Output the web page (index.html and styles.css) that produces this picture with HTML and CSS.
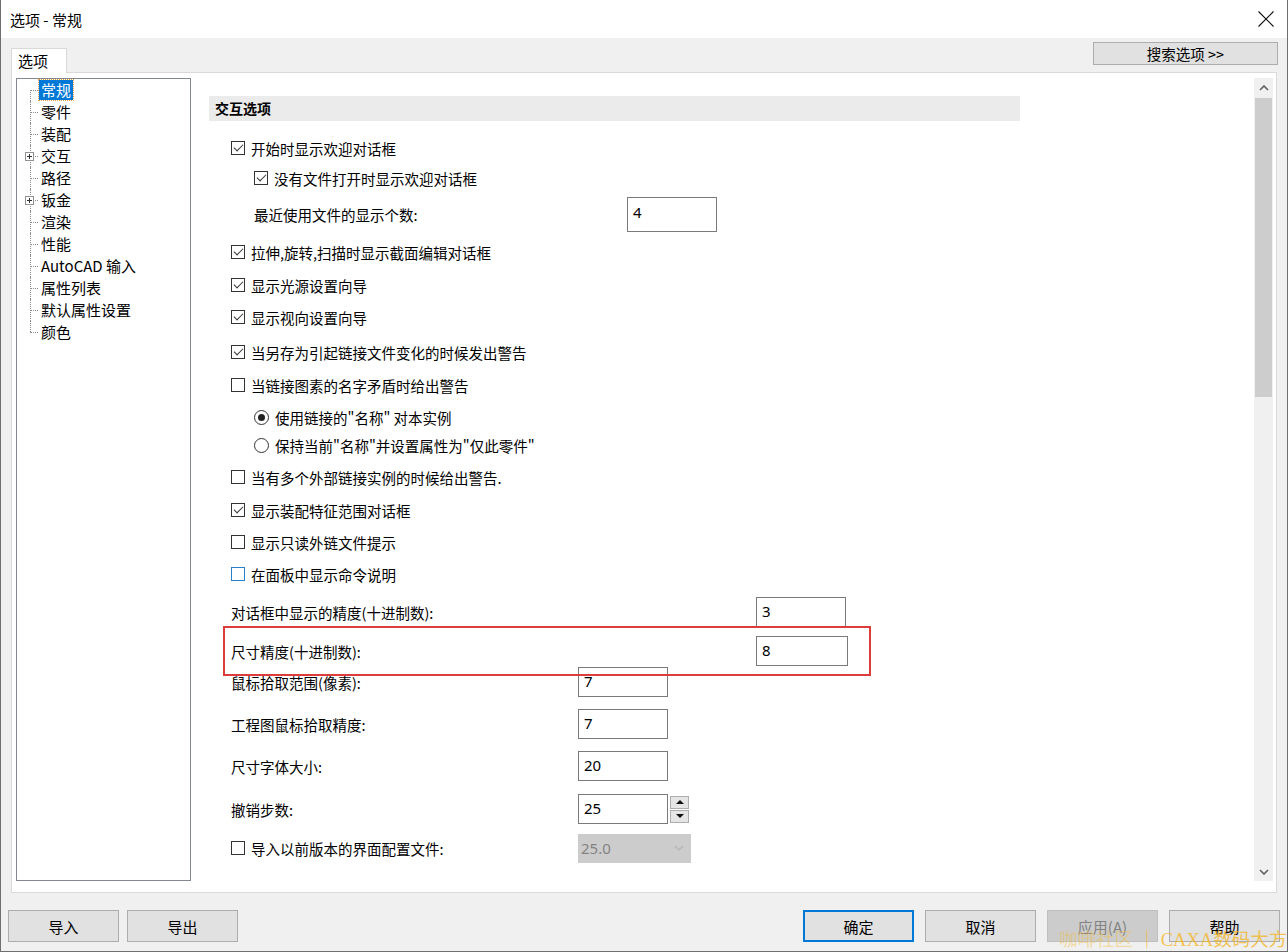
FILE: index.html
```html
<!DOCTYPE html>
<html lang="zh-CN">

<head>
    <meta charset="UTF-8">
    <title>选项 - 常规</title>
    <link rel="stylesheet" href="styles.css">
</head>

<body>
    <div class="window">
        <!-- title bar -->
        <div class="titlebar">
            <span>选项 - 常规</span>
            <svg class="close" width="16" height="16" viewBox="0 0 16 16">
                <path d="M0.5 0.5 L15.5 15.5 M15.5 0.5 L0.5 15.5" stroke="#111" stroke-width="1.1" fill="none" />
            </svg>
        </div>

        <div class="dialog">
            <div class="tab-row">
                <div class="tab">选项</div>
                <button class="search-btn">搜索选项 &gt;&gt;</button>
            </div>

            <div class="panel">
                <!-- left tree -->
                <ul class="tree">
                    <li><span class="node selected">常规</span></li>
                    <li><span class="node">零件</span></li>
                    <li><span class="node">装配</span></li>
                    <li>
                        <svg class="expander" width="9" height="9" viewBox="0 0 9 9">
                            <rect x="0.5" y="0.5" width="8" height="8" fill="#fff" stroke="#919191" />
                            <path d="M2 4.5 H7 M4.5 2 V7" stroke="#333" />
                        </svg>
                        <span class="node">交互</span>
                    </li>
                    <li><span class="node">路径</span></li>
                    <li>
                        <svg class="expander" width="9" height="9" viewBox="0 0 9 9">
                            <rect x="0.5" y="0.5" width="8" height="8" fill="#fff" stroke="#919191" />
                            <path d="M2 4.5 H7 M4.5 2 V7" stroke="#333" />
                        </svg>
                        <span class="node">钣金</span>
                    </li>
                    <li><span class="node">渲染</span></li>
                    <li><span class="node">性能</span></li>
                    <li><span class="node">AutoCAD 输入</span></li>
                    <li><span class="node">属性列表</span></li>
                    <li><span class="node">默认属性设置</span></li>
                    <li><span class="node">颜色</span></li>
                </ul>

                <!-- options page -->
                <div class="content">
                    <div class="scroll-area">
                        <div class="section-head">交互选项</div>

                        <div class="opt first"><span class="cb on"></span>开始时显示欢迎对话框</div>
                        <div class="opt indent sp2"><span class="cb on"></span>没有文件打开时显示欢迎对话框</div>
                        <div class="field indent tall">
                            <span class="label w-373">最近使用文件的显示个数:</span>
                            <div class="textbox tb-tall">4</div>
                        </div>
                        <div class="opt sp6"><span class="cb on"></span>拉伸,旋转,扫描时显示截面编辑对话框</div>
                        <div class="opt sp5"><span class="cb on"></span>显示光源设置向导</div>
                        <div class="opt"><span class="cb on"></span>显示视向设置向导</div>
                        <div class="opt sp7"><span class="cb on"></span>当另存为引起链接文件变化的时候发出警告</div>
                        <div class="opt sp5"><span class="cb"></span>当链接图素的名字矛盾时给出警告</div>
                        <div class="opt indent"><span class="rb on"></span>使用链接的"名称" 对本实例</div>
                        <div class="opt indent sp0"><span class="rb"></span>保持当前"名称"并设置属性为"仅此零件"</div>
                        <div class="opt"><span class="cb"></span>当有多个外部链接实例的时候给出警告.</div>
                        <div class="opt sp5"><span class="cb on"></span>显示装配特征范围对话框</div>
                        <div class="opt"><span class="cb"></span>显示只读外链文件提示</div>
                        <div class="opt"><span class="cb hover"></span>在面板中显示命令说明</div>

                        <div class="field sp9">
                            <span class="label w-525">对话框中显示的精度(十进制数):</span>
                            <div class="textbox">3</div>
                        </div>
                        <div class="field sp9">
                            <span class="label w-525">尺寸精度(十进制数):</span>
                            <div class="textbox wide">8</div>
                        </div>
                        <div class="field sp1">
                            <span class="label w-347">鼠标拾取范围(像素):</span>
                            <div class="textbox">7</div>
                        </div>
                        <div class="field sp12">
                            <span class="label w-347">工程图鼠标拾取精度:</span>
                            <div class="textbox">7</div>
                        </div>
                        <div class="field sp12">
                            <span class="label w-347">尺寸字体大小:</span>
                            <div class="textbox">20</div>
                        </div>
                        <div class="field sp13">
                            <span class="label w-347">撤销步数:</span>
                            <div class="textbox">25</div>
                            <div class="spinner">
                                <span class="spin-btn"><i class="arrow-up"></i></span>
                                <span class="spin-btn"><i class="arrow-down"></i></span>
                            </div>
                        </div>
                        <div class="field sp9">
                            <span class="label w-347"><span class="cb"></span>导入以前版本的界面配置文件:</span>
                            <div class="combo">
                                <span>25.0</span>
                                <svg width="10" height="6" viewBox="0 0 10 6">
                                    <path d="M1 1 L5 5 L9 1" stroke="#b4b4b4" fill="none" stroke-width="1.2" />
                                </svg>
                            </div>
                        </div>
                    </div>

                    <!-- vertical scrollbar -->
                    <div class="scrollbar">
                        <div class="sb-btn">
                            <svg width="10" height="6" viewBox="0 0 10 6">
                                <path d="M1 5 L5 1 L9 5" stroke="#606060" fill="none" stroke-width="1.6" />
                            </svg>
                        </div>
                        <div class="sb-track"><div class="sb-thumb"></div></div>
                        <div class="sb-btn">
                            <svg width="10" height="6" viewBox="0 0 10 6">
                                <path d="M1 1 L5 5 L9 1" stroke="#606060" fill="none" stroke-width="1.6" />
                            </svg>
                        </div>
                    </div>
                </div>
            </div>

            <!-- bottom buttons -->
            <div class="footer">
                <div class="btn-group">
                    <button class="btn">导入</button>
                    <button class="btn">导出</button>
                </div>
                <div class="btn-group right">
                    <button class="btn default">确定</button>
                    <button class="btn">取消</button>
                    <button class="btn disabled">应用(A)</button>
                    <button class="btn">帮助</button>
                </div>
            </div>
        </div>

        <!-- annotation and watermark on top of the screenshot -->
        <div class="mark-box"></div>
        <div class="watermark"><span class="wm-light">咖啡社区</span> ｜ CAXA数码大方</div>
    </div>
</body>

</html>
```

FILE: styles.css
```css
/* Windows style options dialog */
* {
    box-sizing: border-box;
}

body {
    margin: 0;
    font-family: "Noto Sans CJK SC", "Noto Sans", sans-serif;
    font-size: 14.5px;
    color: #000;
    background: #fff;
}

button {
    font-family: inherit;
    color: #000;
    padding: 0;
}

.window {
    position: relative;
    width: 1288px;
    height: 952px;
    border: 1px solid #6e6e6e;
    border-top: none;
    display: flex;
    flex-direction: column;
    overflow: hidden;
}

.titlebar {
    height: 38px;
    flex-shrink: 0;
    display: flex;
    align-items: center;
    justify-content: space-between;
    padding: 0 13px 0 9px;
    background: #fff;
    font-size: 15px;
}

.dialog {
    flex: 1;
    background: #f0f0f0;
    display: flex;
    flex-direction: column;
}

.tab-row {
    height: 34px;
    display: flex;
    justify-content: space-between;
    align-items: flex-start;
    padding: 0 9px 0 10px;
}

.tab {
    position: relative;
    z-index: 1;
    margin-top: 10px;
    width: 56px;
    height: 25px;
    background: #fff;
    border: 1px solid #d9d9d9;
    border-bottom: none;
    padding-left: 6px;
    line-height: 24px;
    font-size: 15px;
}

.search-btn {
    margin-top: 4px;
    width: 185px;
    height: 23px;
    background: #e1e1e1;
    border: 1px solid #adadad;
    font-size: 14.5px;
    line-height: 20px;
}

.panel {
    margin: 0 10px;
    height: 821px;
    border: 1px solid #d9d9d9;
    background: #fff;
    display: flex;
    gap: 1px;
    padding: 5px 3px 0 4px;
}

/* tree view */
.tree {
    list-style: none;
    margin: 0;
    padding: 0;
    width: 175px;
    height: 803px;
    border: 1px solid #828790;
    font-size: 15px;
}

.tree li {
    position: relative;
    height: 22px;
    padding-left: 22px;
    display: flex;
    align-items: center;
}

.tree li::before {
    content: "";
    position: absolute;
    left: 13px;
    top: 11px;
    width: 8px;
    border-top: 1px dotted #8c8c8c;
}

.tree li::after {
    content: "";
    position: absolute;
    left: 13px;
    top: 0;
    height: 22px;
    border-left: 1px dotted #8c8c8c;
}

.tree li:first-child::after {
    top: 11px;
    height: 11px;
}

.tree li:last-child::after {
    height: 11px;
}

.expander {
    position: absolute;
    left: 8px;
    top: 7px;
    z-index: 1;
}

.node {
    padding: 0 2px;
    height: 20px;
    line-height: 20px;
}

.node.selected {
    background: #0078d7;
    color: #fff;
    outline: 1px dotted #e0a040;
}

/* options content */
.content {
    width: 1081px;
    height: 803px;
    display: flex;
}

.scroll-area {
    flex: 1;
    overflow: hidden;
    padding: 18px 0 0 17px;
}

.section-head {
    width: 811px;
    height: 25px;
    background: #ebebeb;
    font-weight: bold;
    font-size: 14px;
    line-height: 25px;
    padding-left: 6px;
}

.opt {
    height: 28px;
    margin-top: 4px;
    margin-left: 22px;
    display: flex;
    align-items: center;
    white-space: nowrap;
}

.opt.first {
    margin-top: 13px;
}

.opt.indent,
.field.indent {
    margin-left: 23px;
    padding-left: 22px;
}

.cb {
    position: relative;
    display: inline-block;
    width: 14px;
    height: 14px;
    border: 1px solid #333;
    background: #fff;
    margin-right: 6px;
    flex-shrink: 0;
}

.cb.on::after {
    content: "";
    position: absolute;
    left: 2px;
    top: 2px;
    width: 8px;
    height: 4px;
    border-left: 1.3px solid #333;
    border-bottom: 1.3px solid #333;
    transform: rotate(-45deg);
}

.cb.hover {
    border-color: #2a7fc9;
}

.rb {
    position: relative;
    display: inline-block;
    width: 15px;
    height: 15px;
    border: 1px solid #333;
    border-radius: 50%;
    margin-right: 6px;
    flex-shrink: 0;
}

.rb.on::after {
    content: "";
    position: absolute;
    left: 3px;
    top: 3px;
    width: 7px;
    height: 7px;
    border-radius: 50%;
    background: #222;
}

.field {
    height: 30px;
    margin-top: 4px;
    margin-left: 22px;
    display: flex;
    align-items: center;
    white-space: nowrap;
}

.field.tall {
    height: 35px;
    margin-top: 5px;
}

.label {
    display: flex;
    align-items: center;
}

.w-347 { width: 347px; }
.w-373 { width: 373px; }
.w-525 { width: 525px; }

.textbox {
    width: 90px;
    height: 30px;
    border: 1px solid #7a7a7a;
    background: #fff;
    padding: 0 5px;
    font-family: "Noto Sans", sans-serif;
    font-size: 15px;
    line-height: 26px;
}

.textbox.wide {
    width: 92px;
}

.textbox.tb-tall {
    height: 35px;
    line-height: 28px;
}

.spinner {
    margin-left: 2px;
    display: flex;
    flex-direction: column;
    gap: 1px;
}

.spin-btn {
    width: 19px;
    height: 13px;
    background: #e5e5e5;
    border: 1px solid #adadad;
    display: flex;
    align-items: center;
    justify-content: center;
}

.arrow-up {
    border-left: 4px solid transparent;
    border-right: 4px solid transparent;
    border-bottom: 4px solid #111;
}

.arrow-down {
    border-left: 4px solid transparent;
    border-right: 4px solid transparent;
    border-top: 4px solid #111;
}

.combo {
    width: 113px;
    height: 29px;
    background: #cccccc;
    display: flex;
    align-items: center;
    justify-content: space-between;
    padding: 0 7px 0 3px;
    color: #838383;
    font-family: "Noto Sans", sans-serif;
    font-size: 15px;
}

/* row spacing tweaks (after .opt/.field so they win) */
.sp0 { margin-top: 0; }
.sp1 { margin-top: 1px; }
.sp2 { margin-top: 2px; }
.sp5 { margin-top: 5px; }
.sp6 { margin-top: 6px; }
.sp7 { margin-top: 7px; }
.sp9 { margin-top: 9px; }
.sp12 { margin-top: 12px; }
.sp13 { margin-top: 13px; }

/* scrollbar */
.scrollbar {
    width: 19px;
    background: #f0f0f0;
    display: flex;
    flex-direction: column;
}

.sb-btn {
    height: 19px;
    display: flex;
    align-items: center;
    justify-content: center;
}

.sb-track {
    flex: 1;
    padding: 1px 1px 0;
}

.sb-thumb {
    height: 299px;
    background: #cdcdcd;
}

/* footer buttons */
.footer {
    flex: 1;
    display: flex;
    justify-content: space-between;
    padding: 17px 7px 0;
}

.btn-group {
    display: flex;
    gap: 8px;
    height: 32px;
}

.btn-group.right {
    gap: 11px;
}

.btn {
    width: 111px;
    height: 32px;
    background: #e1e1e1;
    border: 1px solid #adadad;
    font-size: 15px;
}

.btn.default {
    border: 2px solid #0078d7;
}

.btn.disabled {
    background: #cccccc;
    border-color: #bfbfbf;
    color: #838383;
}

/* red annotation box */
.mark-box {
    position: absolute;
    left: 222px;
    top: 626px;
    width: 648px;
    height: 50px;
    border: 2px solid #dd3c3c;
}

.watermark {
    position: absolute;
    left: 1058px;
    top: 925px;
    white-space: nowrap;
    font-size: 18.5px;
    font-family: "Liberation Serif", "Noto Sans CJK SC", serif;
    color: rgba(242, 180, 30, 0.75);
}

.wm-light {
    color: rgba(242, 190, 60, 0.45);
}
```
